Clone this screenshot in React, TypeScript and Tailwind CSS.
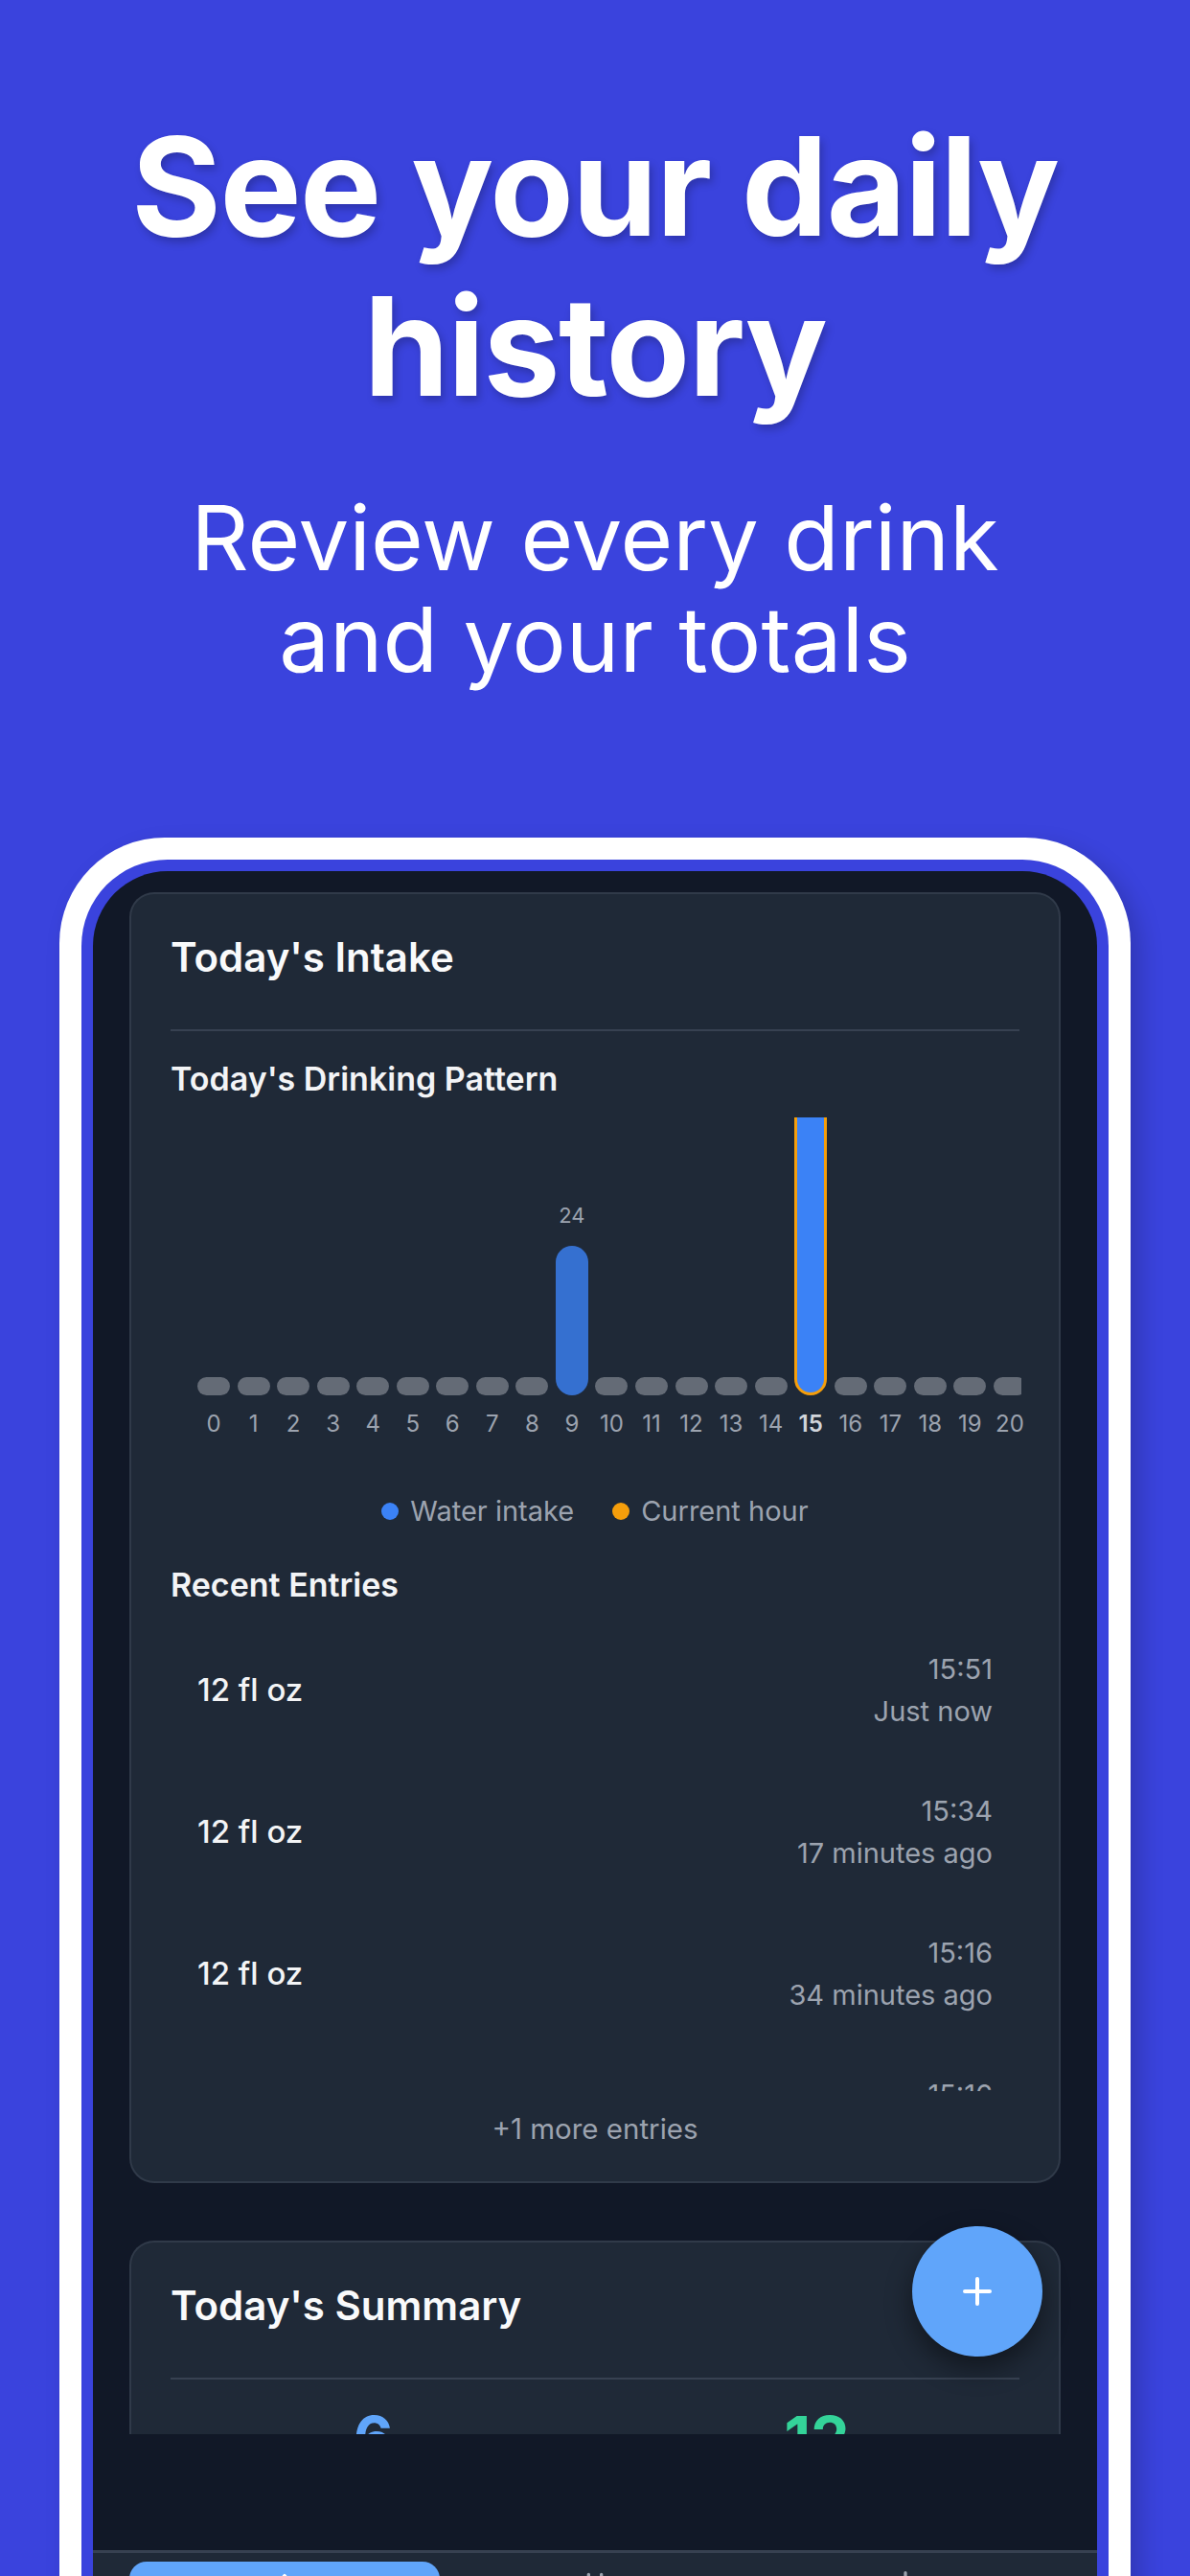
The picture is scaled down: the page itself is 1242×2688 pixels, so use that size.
import React from 'react';

const hours = Array.from({ length: 21 }, (_, i) => i);

const entries = [
  { amount: '12 fl oz', time: '15:51', ago: 'Just now' },
  { amount: '12 fl oz', time: '15:34', ago: '17 minutes ago' },
  { amount: '12 fl oz', time: '15:16', ago: '34 minutes ago' },
  { amount: '12 fl oz', time: '15:16', ago: '35 minutes ago' },
];

const Bar: React.FC<{ hour: number }> = ({ hour }) => {
  if (hour === 9) {
    return (
      <div className="flex flex-col items-center">
        <span className="mb-[20px] text-[22px] leading-[24px] text-[#9ca3af]">24</span>
        <div className="h-[156px] w-[34px] shrink-0 rounded-full bg-[#3b82f6]/80" />
      </div>
    );
  }
  if (hour === 15) {
    return <div className="h-[330px] w-[34px] shrink-0 rounded-full border-[3px] border-[#f59e0b] bg-[#3b82f6]" />;
  }
  return <div className="h-[19px] w-[34px] shrink-0 rounded-full bg-[#646b76]" />;
};

const DrinkingChart: React.FC = () => {
  return (
    <div className="mt-[20px]">
      <div className="flex gap-[7.55px] pl-[28px]">
        {hours.map((h) => (
          <div key={h} className="flex w-[34px] shrink-0 flex-col items-center">
            {/* last column is cut by the card edge, as in a scrolled chart */}
            <div className={h === 20 ? 'flex h-[290px] w-[29px] flex-col items-start justify-end overflow-hidden self-start' : 'flex h-[290px] w-[34px] flex-col items-center justify-end overflow-hidden'}>
              <Bar hour={h} />
            </div>
            <span
              className={
                h === 15
                  ? 'mt-[15px] whitespace-nowrap text-[24px] font-semibold leading-[30px] text-[#d1d5db]'
                  : 'mt-[15px] whitespace-nowrap text-[24px] leading-[30px] text-[#9ca3af]'
              }
            >
              {h}
            </span>
          </div>
        ))}
      </div>
    </div>
  );
};

const App: React.FC = () => {
  return (
    <div className="flex h-[2688px] w-[1242px] flex-col items-center overflow-hidden bg-[#3a43dd] font-['Inter',sans-serif]">
      {/* Headline */}
      <h1 className="mt-[110px] text-center text-[143px] font-bold leading-[167px] tracking-[-1.5px] text-white [text-shadow:3px_5px_8px_rgba(0,0,0,0.22)]">
        See your daily
        <br />
        history
      </h1>
      <p className="mt-[64px] text-center text-[94px] leading-[106px] text-white">
        Review every drink
        <br />
        and your totals
      </p>

      {/* Phone frame */}
      <div className="mt-[154px] w-[1118px] shrink-0 rounded-[110px] bg-white p-[23px] shadow-[10px_10px_24px_rgba(0,0,0,0.18)]">
        <div className="rounded-[90px] bg-[#3a43dd] p-[12px]">
          <div className="relative flex h-[1900px] flex-col overflow-hidden rounded-[78px] bg-[#111827]">
            {/* Scroll content */}
            <div className="h-[1631px] shrink-0 overflow-hidden px-[38px] pt-[22px]">
              {/* Today's Intake */}
              <div className="rounded-[26px] border-2 border-[#374151]/70 bg-[#1f2937] px-[41px] pb-[38px] pt-[40px]">
                <h2 className="text-[42px] font-semibold leading-[52px] text-[#f9fafb]">Today's Intake</h2>
                <div className="mt-[49px] h-[2px] bg-[#374151]" />
                <h3 className="mt-[30px] text-[34px] font-semibold leading-[40px] text-[#f3f4f6]">
                  Today's Drinking Pattern
                </h3>
                <DrinkingChart />

                {/* Legend */}
                <div className="mt-[61px] flex items-center justify-center gap-[40px]">
                  <div className="flex items-center gap-[12px]">
                    <span className="h-[18px] w-[18px] rounded-full bg-[#3b82f6]" />
                    <span className="text-[29px] leading-[30px] text-[#9ca3af]">Water intake</span>
                  </div>
                  <div className="flex items-center gap-[12px]">
                    <span className="h-[18px] w-[18px] rounded-full bg-[#f59e0b]" />
                    <span className="text-[29px] leading-[30px] text-[#9ca3af]">Current hour</span>
                  </div>
                </div>

                <h3 className="mt-[42px] text-[34px] font-semibold leading-[40px] text-[#f3f4f6]">Recent Entries</h3>

                {/* Entries */}
                <div className="mt-[16px] h-[492px] overflow-hidden">
                  {entries.map((e, i) => (
                    <div key={i} className="flex h-[148px] items-center justify-between pl-[28px] pr-[28px]">
                      <span className="text-[33px] font-medium text-[#f3f4f6]">{e.amount}</span>
                      <div className="flex flex-col items-end">
                        <span className="text-[29px] leading-[44px] text-[#9ca3af]">{e.time}</span>
                        <span className="text-[29px] leading-[44px] text-[#9ca3af]">{e.ago}</span>
                      </div>
                    </div>
                  ))}
                </div>
                <p className="mt-[22px] text-center text-[29.5px] leading-[34px] text-[#9ca3af]">+1 more entries</p>
              </div>

              {/* Today's Summary */}
              <div className="mt-[60px] rounded-[26px] border-2 border-[#374151]/70 bg-[#1f2937] px-[41px] pb-[40px] pt-[40px]">
                <h2 className="text-[42px] font-semibold leading-[52px] text-[#f9fafb]">Today's Summary</h2>
                <div className="mt-[49px] h-[2px] bg-[#374151]" />
                <div className="mt-[30px] grid grid-cols-2 gap-[40px]">
                  <div className="flex flex-col items-center">
                    <span className="text-[64px] font-bold leading-[64px] text-[#60a5fa]">6</span>
                    <span className="mt-2 text-[26px] text-[#9ca3af]">Drinks</span>
                  </div>
                  <div className="flex flex-col items-center">
                    <span className="text-[64px] font-bold leading-[64px] text-[#34d399]">12</span>
                    <span className="mt-2 text-[26px] text-[#9ca3af]">Avg fl oz</span>
                  </div>
                </div>
              </div>
            </div>

            {/* Bottom spacer */}
            <div className="h-[121px] shrink-0 bg-[#111827]" />

            {/* Tab bar */}
            <div className="grid shrink-0 grid-cols-3 border-t-[3px] border-[#374151] bg-[#1f2937] px-[38px] pt-[9px]">
              <div className="flex h-[100px] justify-center rounded-[18px] bg-[#60a5fa] pt-[10px]">
                <svg width="40" height="40" viewBox="0 0 24 24" fill="none" stroke="#ffffff" strokeWidth="2" strokeLinecap="round" strokeLinejoin="round">
                  <path d="M12 2.7c3.5 4.3 6 7.6 6 11a6 6 0 0 1-12 0c0-3.4 2.5-6.7 6-11z" />
                </svg>
              </div>
              <div className="flex h-[100px] justify-center pt-[10px]">
                <svg width="40" height="40" viewBox="0 0 24 24" fill="none" stroke="#9ca3af" strokeWidth="2" strokeLinecap="round" strokeLinejoin="round">
                  <rect x="3" y="4" width="18" height="17" rx="2" />
                  <path d="M3 10h18M8 2v4M16 2v4" />
                </svg>
              </div>
              <div className="flex h-[100px] justify-center pt-[10px]">
                <svg width="40" height="40" viewBox="0 0 24 24" fill="none" stroke="#9ca3af" strokeWidth="2" strokeLinecap="round" strokeLinejoin="round">
                  <circle cx="12" cy="12" r="3" />
                  <path d="M12 1v3M12 20v3M4.2 4.2l2.1 2.1M17.7 17.7l2.1 2.1M1 12h3M20 12h3M4.2 19.8l2.1-2.1M17.7 6.3l2.1-2.1" />
                </svg>
              </div>
            </div>

            {/* Floating add button */}
            <button className="absolute left-[855px] top-[1414px] flex h-[136px] w-[136px] items-center justify-center rounded-full bg-[#60a5fa] shadow-[0_12px_28px_rgba(0,0,0,0.45)]">
              <svg width="32" height="32" viewBox="0 0 32 32" fill="none" stroke="#ffffff" strokeWidth="4" strokeLinecap="round">
                <path d="M16 3v26M3 16h26" />
              </svg>
            </button>
          </div>
        </div>
      </div>
    </div>
  );
};

export default App;
